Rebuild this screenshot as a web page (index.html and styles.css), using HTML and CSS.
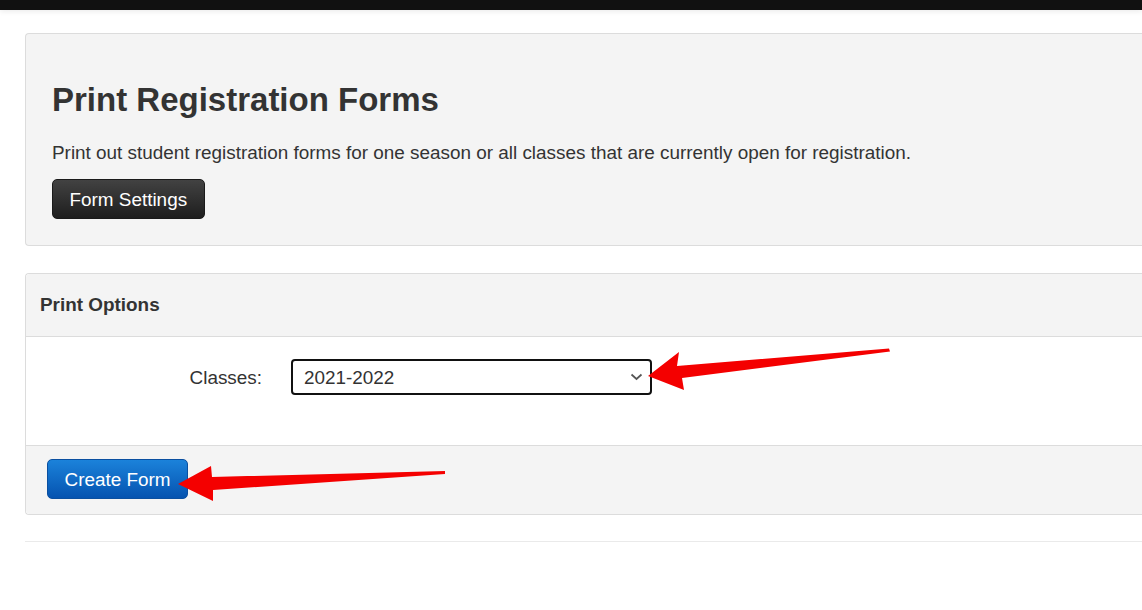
FILE: index.html
```html
<!DOCTYPE html>
<html>
<head>
<meta charset="utf-8">
<title>Print Registration Forms</title>
<link rel="stylesheet" href="styles.css">
</head>
<body>
<div class="topbar"></div>
<div class="page">
  <div class="jumbo">
    <h1 class="title">Print Registration Forms</h1>
    <p class="lead">Print out student registration forms for one season or all classes that are currently open for registration.</p>
    <button class="btn btn-dark">Form Settings</button>
  </div>

  <div class="panel">
    <div class="panel-head">Print Options</div>
    <div class="panel-body">
      <div class="form-row">
        <label class="label">Classes:</label>
        <div class="select">
          <span class="select-text">2021-2022</span>
          <svg class="chev" width="13" height="8" viewBox="0 0 13 8"><path d="M1.5 1.5 L6.5 6 L11.5 1.5" fill="none" stroke="#555" stroke-width="1.7"/></svg>
        </div>
      </div>
    </div>
    <div class="panel-foot">
      <button class="btn btn-blue">Create Form</button>
    </div>
  </div>
  <div class="rule"></div>
</div>

<svg class="arrows" width="1142" height="610" viewBox="0 0 1142 610">
  <polygon fill="#f40000" points="648,376 679,352 677,366 889,348.5 890,351.5 682,378 684,390"/>
  <polygon fill="#f40000" points="178,484 211,466 212,477 445,471 445,474 213,490 213,501"/>
</svg>
</body>
</html>
```

FILE: styles.css
```css
html, body {
  margin: 0;
  padding: 0;
  background: #fff;
}
body {
  font-family: "Liberation Sans", Arial, sans-serif;
  font-size: 18.9px;
  line-height: 27px;
  color: #333;
  overflow: hidden;
  width: 1142px;
  height: 610px;
  position: relative;
}
.topbar {
  height: 10px;
  background: #111;
  box-shadow: 0 2px 5px rgba(0,0,0,0.07);
}
.page {
  padding: 23px 0 0 25px;
  overflow: hidden;
}
.jumbo {
  background: #f4f4f4;
  border: 1px solid #dcdcdc;
  border-right: none;
  border-radius: 4px 0 0 4px;
  padding: 48px 26px 26px;
}
.title {
  margin: 0;
  font-size: 33px;
  line-height: 36px;
  font-weight: bold;
  color: #333;
}
.lead {
  margin: 21px 0 13px;
}
.btn {
  font-family: "Liberation Sans", Arial, sans-serif;
  font-size: 18.9px;
  line-height: 27px;
  color: #fff;
  border-radius: 5px;
  height: 40px;
  padding: 0 16.5px;
  cursor: pointer;
  display: block;
}
.btn-dark {
  background: linear-gradient(#424242, #1e1e1e);
  border: 1px solid #1a1a1a;
}
.btn-blue {
  background: linear-gradient(#1b82da, #0553b0);
  border: 1px solid #0a4fa0;
}
.panel {
  margin-top: 27px;
  border: 1px solid #dcdcdc;
  border-right: none;
  border-radius: 4px 0 0 4px;
  background: #fff;
}
.panel-head {
  background: #f4f4f4;
  border-bottom: 1px solid #dcdcdc;
  padding: 17px 14px 18px;
  font-weight: bold;
  border-radius: 4px 0 0 0;
}
.panel-body {
  padding: 22px 0 50px;
}
.form-row {
  display: flex;
  align-items: center;
  gap: 29px;
}
.label {
  width: 236px;
  text-align: right;
  color: #333;
}
.select {
  width: 361px;
  height: 36px;
  box-sizing: border-box;
  border: 2px solid #111;
  border-radius: 4px;
  background: #fff;
  display: flex;
  align-items: center;
  justify-content: space-between;
  padding: 0 7px 0 11px;
  color: #333;
}
.chev {
  display: block;
}
.panel-foot {
  background: #f4f4f4;
  border-top: 1px solid #dcdcdc;
  padding: 13px 21px 15px;
  border-radius: 0 0 0 4px;
}
.rule {
  margin-top: 26px;
  border-top: 1px solid #eaeaea;
}
.arrows {
  position: absolute;
  left: 0;
  top: 0;
  pointer-events: none;
}
```
